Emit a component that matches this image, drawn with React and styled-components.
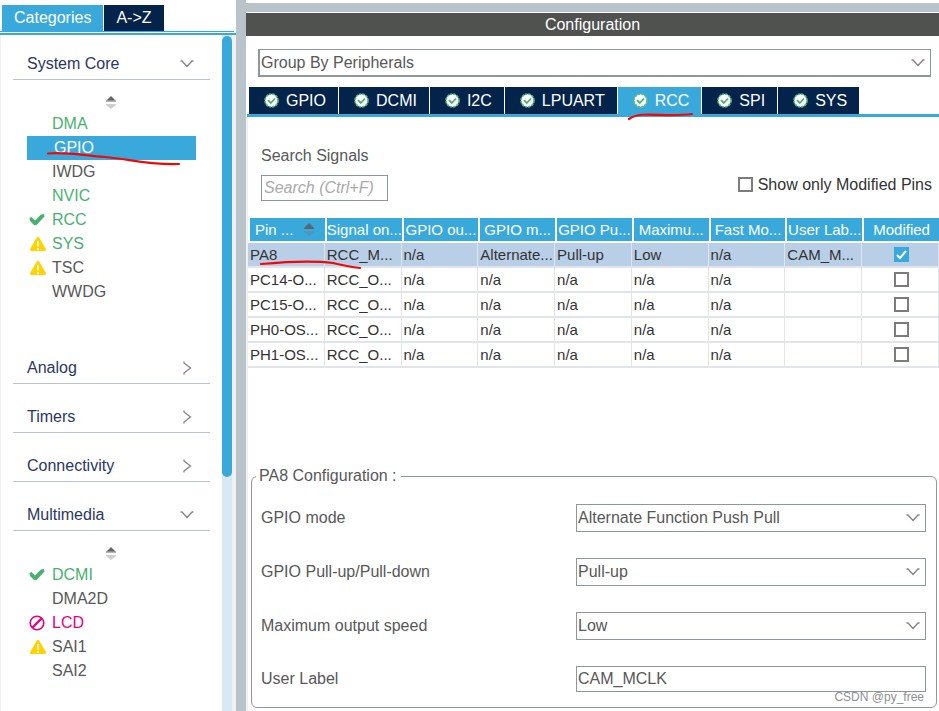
import React, { useState } from 'react';
import styled, { createGlobalStyle } from 'styled-components';

const GlobalStyle = createGlobalStyle`
  *, *::before, *::after {
    box-sizing: border-box;
  }

  body {
    margin: 0;
    background: #ffffff;
  }

  body, button, input, select {
    font-family: 'Liberation Sans', Arial, sans-serif;
    font-size: 16px;
    line-height: 20px;
    color: #585858;
  }
`;

const Page = styled.div`
  display: flex;
  min-height: 100vh;
`;

/* ---------- sidebar ---------- */

const Sidebar = styled.aside`
  flex: none;
  width: 236px;
  display: flex;
  flex-direction: column;
  padding-top: 5px;
`;

const SidebarTabs = styled.div`
  display: flex;
  gap: 1px;
  padding-left: 2px;
  margin-right: 2px;
  border-bottom: 1px solid #39a9dc;
`;

const SidebarTab = styled.button`
  height: 26px;
  padding: 0 12px;
  border: 0;
  color: #ffffff;
  background: ${({ $active }) => ($active ? '#39a9dc' : '#03234b')};
`;

const SidebarBody = styled.div`
  flex: 1;
  display: flex;
  margin-top: 1px;
  border-top: 2px solid #39a9dc;
`;

const Categories = styled.nav`
  flex: 1;
  display: flex;
  flex-direction: column;
  gap: 5px;
  padding: 1px 12px 0;
  border-left: 1px solid #eef0f2;
`;

const CategoryButton = styled.button`
  display: flex;
  align-items: center;
  justify-content: space-between;
  width: 100%;
  height: 44px;
  padding: 12px 15px 0 14px;
  border: 0;
  border-bottom: 1px solid #b8c4ca;
  background: none;
  color: #2b3763;
`;

const Items = styled.ul`
  list-style: none;
  margin: 0;
  padding: 16px 14px 31px;
`;

const SortRow = styled.li`
  display: flex;
  justify-content: center;
  height: 16px;
  padding-right: 2px;
`;

const Item = styled.li`
  position: relative;
  display: flex;
  align-items: center;
  gap: 7px;
  height: 24px;
  padding-left: ${({ $selected }) => ($selected ? '4px' : '2px')};
  background: ${({ $selected }) => ($selected ? '#39a9dc' : 'none')};
`;

const IconSlot = styled.span`
  display: flex;
  width: 16px;
  height: 16px;

  svg {
    flex: none;
  }
`;

const ItemLink = styled.a`
  color: ${({ $color }) => $color};
  text-decoration: none;
`;

const Track = styled.div`
  flex: none;
  width: 14px;
  padding-top: 1px;
  border-right: 4px solid #f0f1f3;
  background: #d9e8f5;
`;

const Thumb = styled.div`
  height: 65%;
  border-radius: 5px;
  background: #39a9dc;
`;

const Splitter = styled.div`
  flex: none;
  width: 10px;
  background: #b8c4ca;
`;

/* ---------- main panel ---------- */

const Main = styled.main`
  flex: 1;
  min-width: 0;
  display: flex;
  flex-direction: column;
  padding-top: 3px;
`;

const TopStrip = styled.div`
  height: 9px;
  margin-bottom: 1px;
  background: #b8c4ca;
`;

const Title = styled.h1`
  margin: 0;
  height: 23px;
  font-size: 16px;
  font-weight: normal;
  line-height: 23px;
  text-align: center;
  color: #ffffff;
  background: #50524f;
`;

const SelectBox = styled.div`
  position: relative;
  display: flex;

  svg {
    position: absolute;
    right: 5px;
    top: 6px;
    pointer-events: none;
  }
`;

const Select = styled.select`
  appearance: none;
  width: 100%;
  height: 28px;
  padding: 0 24px 0 1px;
  border: 1px solid #8f979c;
  border-radius: 0;
  background: #ffffff;
`;

const GroupSelect = styled(Select)`
  border-left-width: 2px;
  border-bottom-width: 2px;
`;

const GroupRow = styled.div`
  padding: 13px 8px 10px 12px;
`;

const PeripheralTabs = styled.div`
  display: flex;
  gap: 1px;
  margin-left: 1px;
  padding-left: 2px;
  border-bottom: 3px solid #39a9dc;
`;

const PeripheralTab = styled.button`
  position: relative;
  display: flex;
  align-items: center;
  gap: 7px;
  height: 27px;
  padding: 0 12px 0 15px;
  border: 0;
  color: #ffffff;
  background: ${({ $active }) => ($active ? '#39a9dc' : '#03234b')};
`;

const Panel = styled.section`
  flex: 1;
  padding-bottom: 3px;
  border-left: 2px solid #f0f1f3;
`;

const SearchRow = styled.div`
  display: flex;
  align-items: center;
  justify-content: space-between;
  padding: 29px 7px 17px 13px;
`;

const SearchField = styled.div`
  display: flex;
  flex-direction: column;
  gap: 9px;
`;

const SearchInput = styled.input`
  width: 127px;
  height: 26px;
  padding: 0 2px;
  border: 1px solid #8f979c;

  &::placeholder {
    color: #aaaaaa;
    font-style: italic;
  }
`;

const CheckLabel = styled.label`
  display: flex;
  align-items: center;
  gap: 5px;
  padding-top: 22px;
  color: #333333;
`;

const Checkbox = styled.input.attrs({ type: 'checkbox' })`
  appearance: none;
  flex: none;
  width: 15px;
  height: 15px;
  margin: 0;
  border: 2px solid #7c7c7c;
  background: #ffffff;

  &:checked {
    border-color: #39a9dc;
    background: #39a9dc
      url("data:image/svg+xml,%3Csvg xmlns='http://www.w3.org/2000/svg' viewBox='0 0 11 11'%3E%3Cpath d='M1 6l3 3 6-7' fill='none' stroke='white' stroke-width='2'/%3E%3C/svg%3E");
  }
`;

const TableWrap = styled.div`
  position: relative;
`;

const PinTable = styled.table`
  width: 100%;
  table-layout: fixed;
  border-collapse: separate;
  border-spacing: 0;
  font-size: 15px;
  color: #333333;
`;

const Th = styled.th`
  height: 25px;
  padding: 0;
  border: 0 solid #ffffff;
  border-width: 0 0 2px 2px;
  font-weight: normal;
  line-height: 23px;
  white-space: nowrap;
  color: #ffffff;
  background: #39a9dc;
  background-clip: padding-box;
`;

const SortHeader = styled.span`
  display: flex;
  align-items: center;
  justify-content: space-between;
  padding: 0 10px 0 5px;
`;

const Td = styled.td`
  height: 25px;
  padding: 0 0 0 2px;
  border-right: 1px solid #e1e4e8;
  border-bottom: 2px solid #e1e4e8;
  line-height: 23px;
  white-space: nowrap;
  background: ${({ $selected }) => ($selected ? '#b9cfe7' : '#ffffff')};
`;

const CenterCell = styled.div`
  display: flex;
  justify-content: center;
`;

const PinConfig = styled.fieldset`
  display: grid;
  grid-template-columns: 9fr 10fr;
  row-gap: 26px;
  align-items: center;
  margin: 98px 2px 0 3px;
  padding: 18px 10px 15px 9px;
  border: 1px solid #8f979c;
  border-radius: 6px;
`;

const Legend = styled.legend`
  margin-left: -5px;
  padding: 0 4px 0 3px;
`;

const TextInput = styled.input`
  width: 100%;
  height: 26px;
  padding: 0 1px;
  border: 1px solid #8f979c;
`;

const Watermark = styled.div`
  position: absolute;
  right: 15px;
  bottom: 9px;
  font-size: 12px;
  line-height: 16px;
  color: #909090;
`;

const PanelFrame = styled.div`
  position: relative;
  flex: 1;
  display: flex;
  flex-direction: column;
`;

const Mark = styled.svg`
  position: absolute;
  z-index: 1;
  left: ${({ $left }) => $left}px;
  top: ${({ $top }) => $top}px;
  fill: none;
  stroke: #f00808;
  stroke-width: 2.2;
  stroke-linecap: round;
  pointer-events: none;
`;

/* ---------- icons ---------- */

const ChevronDown = () => (
  <svg width="16" height="16" viewBox="0 0 16 16" fill="none" stroke="#858585" strokeWidth="1.3">
    <path d="M1.5 5h1.5L8 10.500 13 5h1.500" />
  </svg>
);

const ChevronRight = () => (
  <svg width="16" height="16" viewBox="0 0 16 16" fill="none" stroke="#858585" strokeWidth="1.3">
    <path d="M5 1.500V3L11.500 8 5 13v1.500" />
  </svg>
);

const SortIcon = ({ header }) => (
  <svg width="12" height="14" viewBox="0 0 12 14">
    <path d="M6 0L11 5V6H1V5Z" fill={header ? '#5c6670' : '#666666'} />
    {!header && <path d="M1 4.500h10V6H1Z" fill="#b5b5b5" />}
    <path d="M1 8h10v1L6 13 1 9Z" fill={header ? '#4d97bd' : '#cfcfcf'} />
  </svg>
);

const CheckIcon = () => (
  <svg width="16" height="16" viewBox="0 0 16 16">
    <path d="M.5 6L2.500 5 6 8.500 12 2.500l3-.5.500 2.500L8.500 12 7.500 13H5L1 9Z" fill="#49b170" />
  </svg>
);

const WarningIcon = () => (
  <svg width="18" height="16" viewBox="0 0 18 16">
    <path
      d="M9 2.500L15.500 13.500H2.500Z"
      fill="#ffd200"
      stroke="#ffd200"
      strokeWidth="3"
      strokeLinejoin="round"
    />
    <path d="M9 5v5.500M9 12v2" stroke="#fff6cc" strokeWidth="2" />
  </svg>
);

const ForbiddenIcon = () => (
  <svg width="16" height="16" viewBox="0 0 16 16" fill="none" stroke="#e6007e">
    <circle cx="8" cy="8" r="6.800" strokeWidth="1.600" />
    <path d="M3.500 12.500L12.500 3.500" strokeWidth="2.400" />
  </svg>
);

const OkBadge = () => (
  <svg width="15" height="15" viewBox="0 0 15 15">
    <circle cx="7.500" cy="7.500" r="6.500" fill="#ffffff" stroke="#5fbd84" strokeWidth="1.600" strokeDasharray="2.600 .8" />
    <path d="M4 7.200l2.800 2.800L11 5.500" fill="none" stroke="#49b170" strokeWidth="1.800" />
  </svg>
);

const STATUS_ICONS = {
  ok: <CheckIcon />,
  warning: <WarningIcon />,
  forbidden: <ForbiddenIcon />,
};

/* ---------- data ---------- */

const GREEN = '#49b170';
const GREY = '#585858';
const PINK = '#e6007e';

const CATEGORIES = [
  {
    name: 'System Core',
    items: [
      { name: 'DMA', color: GREEN },
      { name: 'GPIO', color: '#ffffff', selected: true },
      { name: 'IWDG', color: GREY },
      { name: 'NVIC', color: GREEN },
      { name: 'RCC', color: GREEN, status: 'ok' },
      { name: 'SYS', color: GREEN, status: 'warning' },
      { name: 'TSC', color: GREY, status: 'warning' },
      { name: 'WWDG', color: GREY },
    ],
  },
  { name: 'Analog' },
  { name: 'Timers' },
  { name: 'Connectivity' },
  {
    name: 'Multimedia',
    items: [
      { name: 'DCMI', color: GREEN, status: 'ok' },
      { name: 'DMA2D', color: GREY },
      { name: 'LCD', color: PINK, status: 'forbidden' },
      { name: 'SAI1', color: GREY, status: 'warning' },
      { name: 'SAI2', color: GREY },
    ],
  },
];

const PERIPHERALS = ['GPIO', 'DCMI', 'I2C', 'LPUART', 'RCC', 'SPI', 'SYS'];

const COLUMNS = [
  'Signal on...',
  'GPIO ou...',
  'GPIO m...',
  'GPIO Pu...',
  'Maximu...',
  'Fast Mo...',
  'User Lab...',
  'Modified',
];

const PINS = [
  ['PA8', 'RCC_M...', 'n/a', 'Alternate...', 'Pull-up', 'Low', 'n/a', 'CAM_M...'],
  ['PC14-O...', 'RCC_O...', 'n/a', 'n/a', 'n/a', 'n/a', 'n/a', ''],
  ['PC15-O...', 'RCC_O...', 'n/a', 'n/a', 'n/a', 'n/a', 'n/a', ''],
  ['PH0-OS...', 'RCC_O...', 'n/a', 'n/a', 'n/a', 'n/a', 'n/a', ''],
  ['PH1-OS...', 'RCC_O...', 'n/a', 'n/a', 'n/a', 'n/a', 'n/a', ''],
];

const SETTINGS = [
  { id: 'mode', label: 'GPIO mode', value: 'Alternate Function Push Pull' },
  { id: 'pull', label: 'GPIO Pull-up/Pull-down', value: 'Pull-up' },
  { id: 'speed', label: 'Maximum output speed', value: 'Low' },
];

const Category = ({ name, items }) => {
  const [open, setOpen] = useState(Boolean(items));

  return (
    <div>
      <CategoryButton type="button" aria-expanded={open} onClick={() => setOpen(!open)}>
        {name}
        {open ? <ChevronDown /> : <ChevronRight />}
      </CategoryButton>
      {open && items && (
        <Items>
          <SortRow>
            <SortIcon />
          </SortRow>
          {items.map((item) => (
            <Item key={item.name} $selected={item.selected}>
              <IconSlot>{STATUS_ICONS[item.status]}</IconSlot>
              <ItemLink href="#" $color={item.color}>{item.name}</ItemLink>
              {item.selected && (
                <Mark $left={18} $top={14} width="138" height="18">
                  <path d="M3 3.500C20 2 32 4.500 60 7C85 9 100 15 134 14" />
                </Mark>
              )}
            </Item>
          ))}
        </Items>
      )}
    </div>
  );
};

const App = () => {
  const [tab, setTab] = useState('RCC');

  return (
    <>
      <GlobalStyle />
      <Page>
        <Sidebar>
          <SidebarTabs>
            <SidebarTab type="button" $active>Categories</SidebarTab>
            <SidebarTab type="button">A-&gt;Z</SidebarTab>
          </SidebarTabs>
          <SidebarBody>
            <Categories>
              {CATEGORIES.map((category) => (
                <Category key={category.name} {...category} />
              ))}
            </Categories>
            <Track>
              <Thumb />
            </Track>
          </SidebarBody>
        </Sidebar>
        <Splitter />
        <Main>
          <TopStrip />
          <Title>Configuration</Title>
          <GroupRow>
            <SelectBox>
              <GroupSelect aria-label="Grouping">
                <option>Group By Peripherals</option>
              </GroupSelect>
              <ChevronDown />
            </SelectBox>
          </GroupRow>
          <PeripheralTabs>
            {PERIPHERALS.map((name) => (
              <PeripheralTab
                key={name}
                type="button"
                $active={name === tab}
                onClick={() => setTab(name)}
              >
                <OkBadge />
                {name}
                {name === 'RCC' && (
                  <Mark $left={8} $top={23} width="70" height="12">
                    <path d="M3 9C16 0 36 8 66 4" />
                  </Mark>
                )}
              </PeripheralTab>
            ))}
          </PeripheralTabs>
          <PanelFrame>
            <Panel>
              <SearchRow>
                <SearchField>
                  <label htmlFor="search">Search Signals</label>
                  <SearchInput id="search" placeholder="Search (Ctrl+F)" />
                </SearchField>
                <CheckLabel>
                  <Checkbox />
                  Show only Modified Pins
                </CheckLabel>
              </SearchRow>
              <TableWrap>
                <PinTable>
                  <thead>
                    <tr>
                      <Th>
                        <SortHeader>
                          Pin ...
                          <SortIcon header />
                        </SortHeader>
                      </Th>
                      {COLUMNS.map((column) => (
                        <Th key={column}>{column}</Th>
                      ))}
                    </tr>
                  </thead>
                  <tbody>
                    {PINS.map((pin, row) => (
                      <tr key={pin[0]}>
                        {pin.map((value, col) => (
                          <Td key={col} $selected={row === 0}>{value}</Td>
                        ))}
                        <Td $selected={row === 0}>
                          <CenterCell>
                            <Checkbox defaultChecked={row === 0} aria-label={`${pin[0]} modified`} />
                          </CenterCell>
                        </Td>
                      </tr>
                    ))}
                  </tbody>
                </PinTable>
                <Mark $left={10} $top={40} width="106" height="14">
                  <path d="M3 6C35 3 60 3 75 5C90 8 90 9 102 10" />
                </Mark>
              </TableWrap>
              <PinConfig>
                <Legend>PA8 Configuration :</Legend>
                {SETTINGS.map(({ id, label, value }) => (
                  <React.Fragment key={id}>
                    <label htmlFor={id}>{label}</label>
                    <SelectBox>
                      <Select id={id}>
                        <option>{value}</option>
                      </Select>
                      <ChevronDown />
                    </SelectBox>
                  </React.Fragment>
                ))}
                <label htmlFor="userLabel">User Label</label>
                <TextInput id="userLabel" defaultValue="CAM_MCLK" />
              </PinConfig>
            </Panel>
            <Watermark>CSDN @py_free</Watermark>
          </PanelFrame>
        </Main>
      </Page>
    </>
  );
};

export default App;
